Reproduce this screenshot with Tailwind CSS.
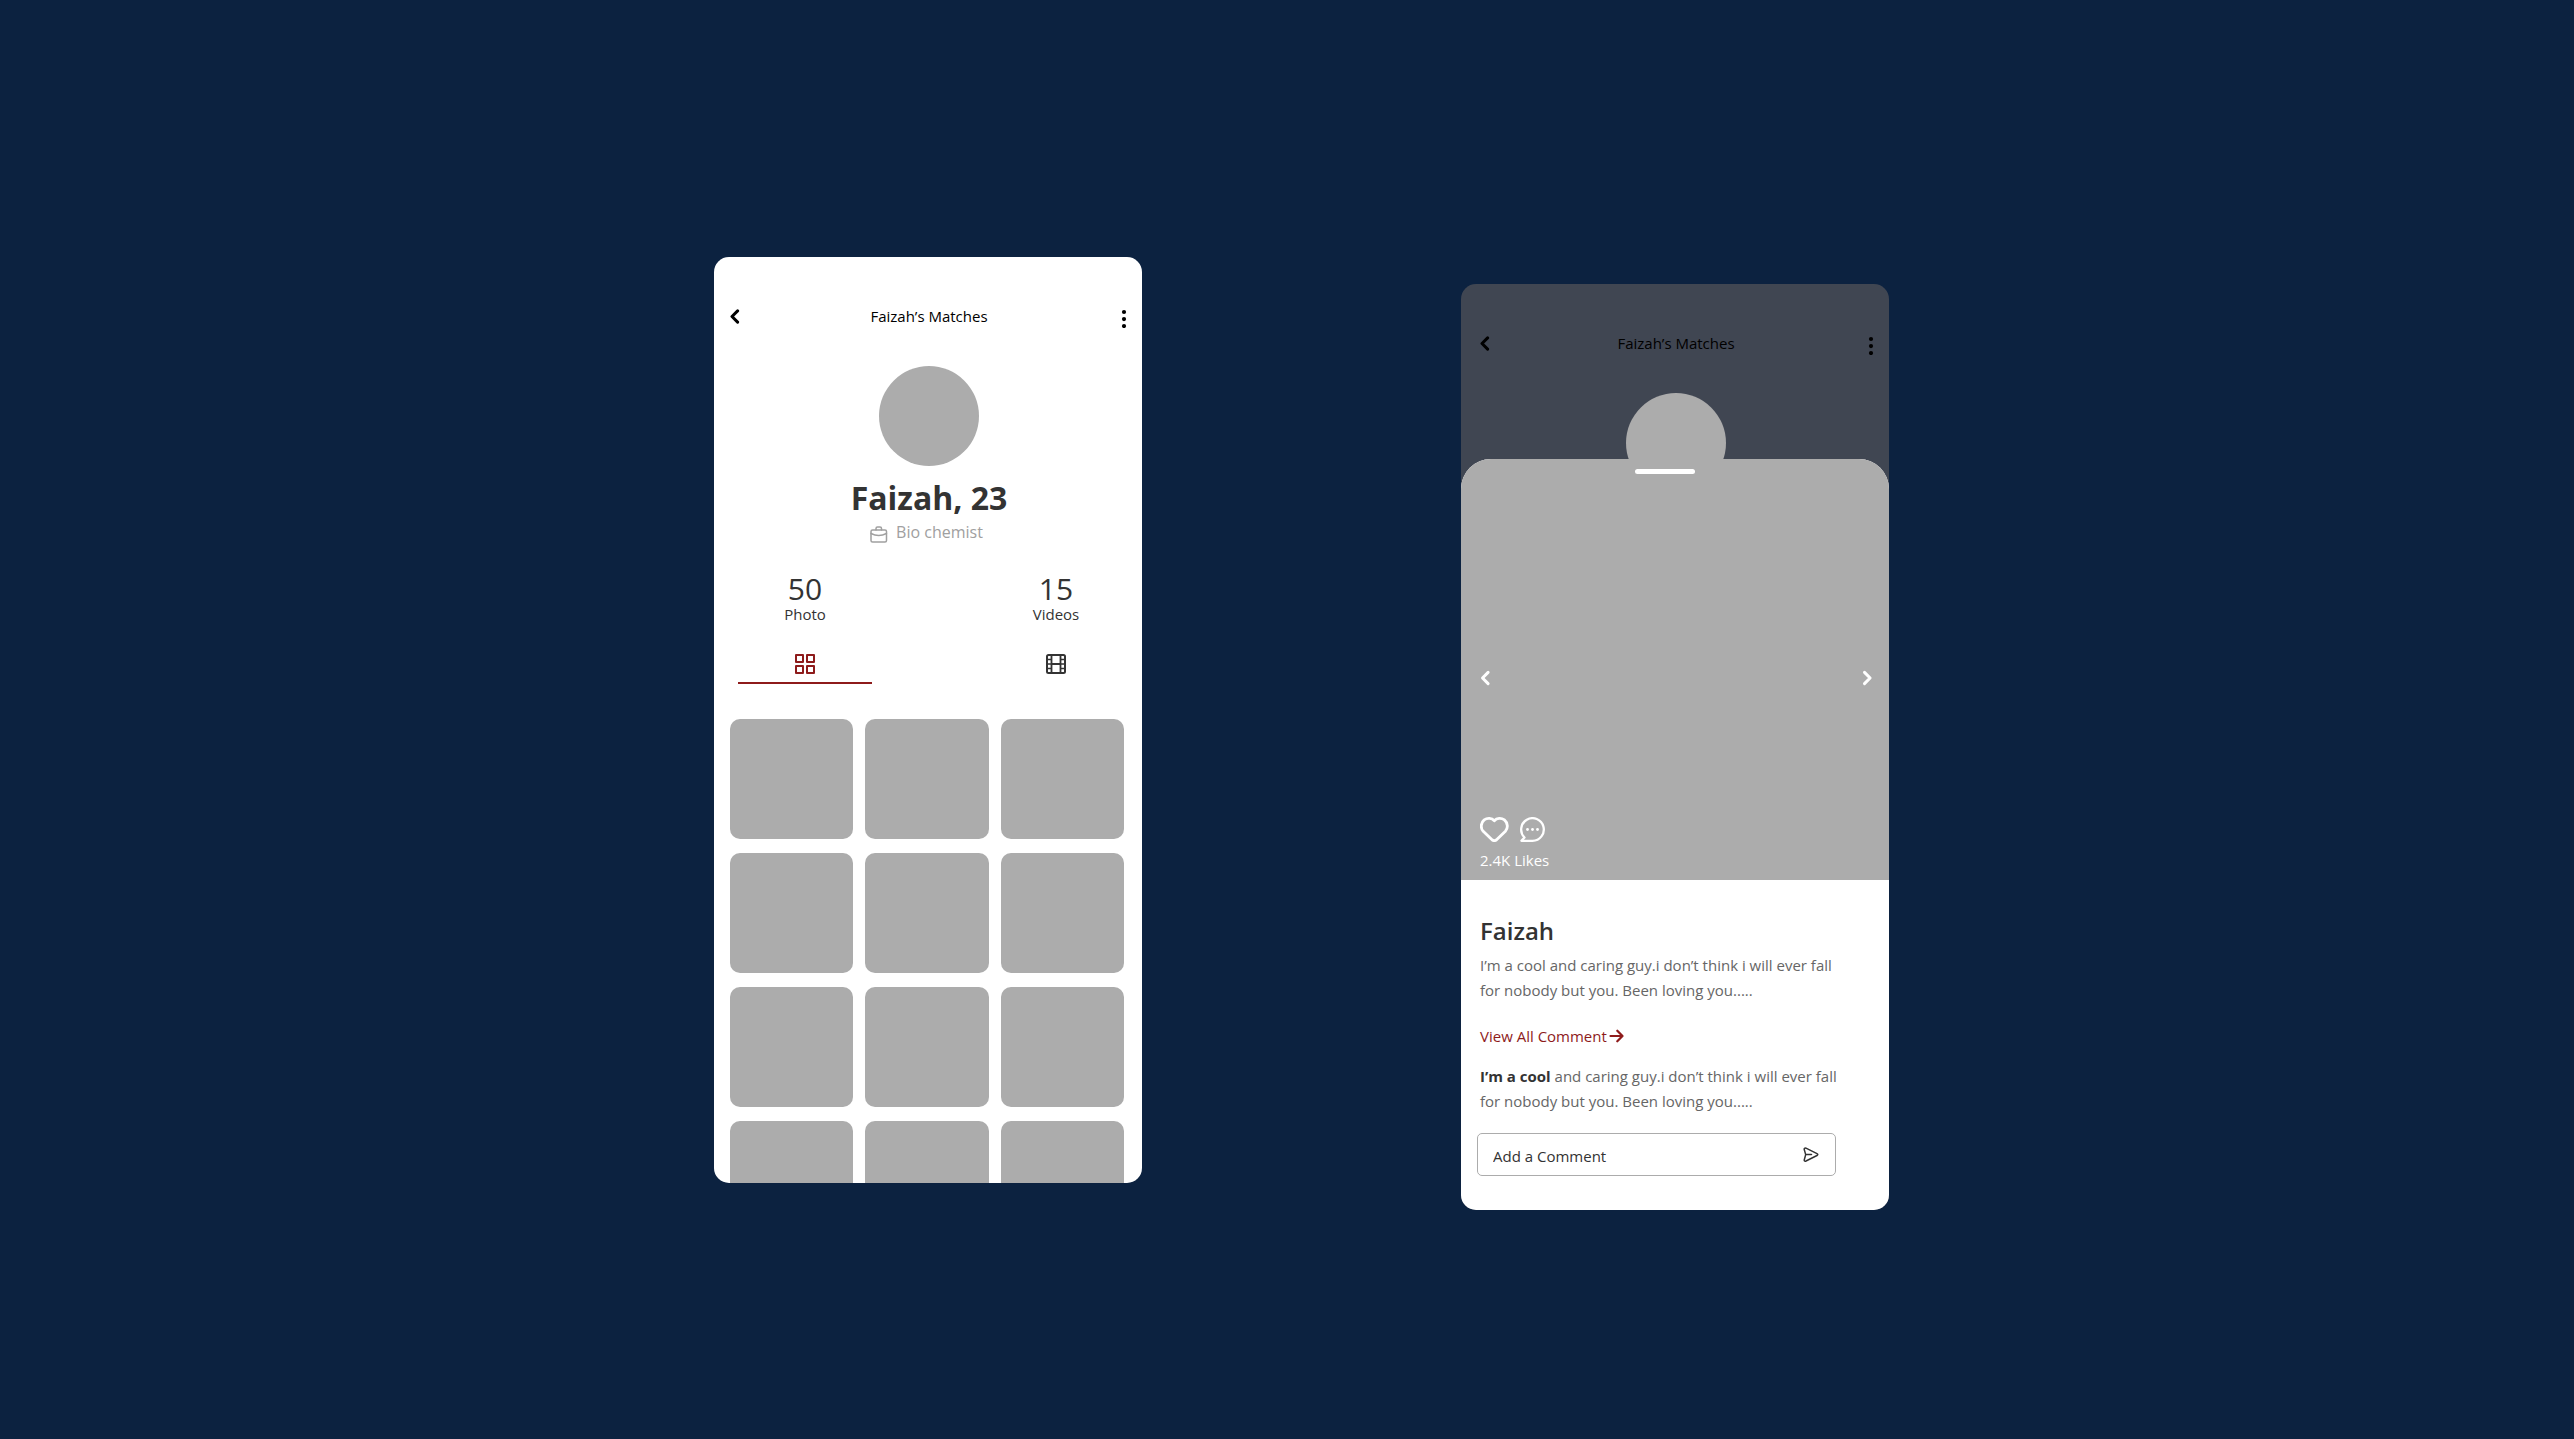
<!DOCTYPE html>
<html lang="en">
<head>
<meta charset="utf-8">
<meta name="viewport" content="width=device-width, initial-scale=1">
<title>Faizah’s Matches</title>
<script src="https://cdn.jsdelivr.net/npm/@tailwindcss/browser@4"></script>
</head>
<body class="bg-[#0c2240] font-['Open_Sans',sans-serif] text-[15px] leading-5 text-[#333333]">
<main class="flex min-h-screen flex-wrap items-start justify-center gap-x-[319px] gap-y-10 pt-[257px] pb-10 pl-[29px]">

  <!-- Profile -->
  <section class="h-[926px] w-[428px] max-w-full overflow-hidden rounded-[15px] bg-white pt-[49px] pr-[14px] pl-4">
    <header class="flex h-5 items-center justify-between text-black">
      <button type="button" aria-label="Back" class="w-8"><svg class="h-4 w-[10px]" viewBox="0 0 10 16" fill="none" stroke="currentColor" stroke-width="3" stroke-linecap="round" stroke-linejoin="round"><path d="M7.600 2.900 2 8.500l5.600 5.600"/></svg></button>
      <h1>Faizah’s Matches</h1>
      <button type="button" aria-label="More" class="flex w-8 justify-end"><svg class="h-6 w-2" viewBox="0 0 8 24" fill="currentColor"><circle cx="4" cy="8" r="2.1"/><circle cx="4" cy="15.100" r="2.1"/><circle cx="4" cy="22" r="2.100"/></svg></button>
    </header>
    <div class="mx-auto mt-10 size-[100px] rounded-full bg-[#acacac]"></div>
    <h2 class="mt-3 text-center text-[32px] leading-10 font-bold">Faizah, 23</h2>
    <p class="mt-[2px] flex items-end justify-center gap-2 pr-[5px] text-base text-[#a0a0a0]">
      <svg class="size-[18px]" viewBox="0 0 18 18" fill="none" stroke="currentColor" stroke-width="1.500" stroke-linecap="round" stroke-linejoin="round"><rect x="1" y="4" width="15.500" height="12" rx="1.500"/><path d="M6 4V2.500Q6 1 7.500 1H10Q11.500 1 11.500 2.500V4M1 7.500Q8.700 11.500 16.500 7.500"/></svg>
      <span>Bio chemist</span>
    </p>
    <div class="mt-[29px] flex justify-between pr-[5px] pl-2 text-center">
      <button type="button" class="w-[134px] border-b-2 border-[#8e1b1b] pb-2">
        <span class="block text-[30px] leading-[31px]">50</span>
        <span class="block">Photo</span>
        <svg class="mx-auto mt-[30px] size-5 text-[#8e1b1b]" viewBox="0 0 20 20" fill="none" stroke="currentColor" stroke-width="2" stroke-linejoin="round"><path d="M1 1h7v7H1zM12 1h7v7h-7zM1 12h7v7H1zM12 12h7v7h-7z"/></svg>
      </button>
      <button type="button" class="w-[134px] border-b-2 border-transparent pb-2">
        <span class="block text-[30px] leading-[31px]">15</span>
        <span class="block">Videos</span>
        <svg class="mx-auto mt-[30px] size-5" viewBox="0 0 20 20" fill="none" stroke="currentColor"><rect x="1" y="1" width="18" height="18" rx="1.500" stroke-width="2"/><path stroke-width="1.800" d="M5.500 1v18M14.500 1v18M5.500 10h9"/><path stroke-width="1.600" d="M1 5.500h4.500M1 10h4.500M1 14.500h4.500M14.500 5.500H19M14.500 10H19M14.500 14.500H19"/></svg>
      </button>
    </div>
    <div class="mt-[35px] mr-1 grid grid-cols-3 gap-x-3 gap-y-[14px]">
      <div class="h-[120px] rounded-[10px] bg-[#acacac]"></div>
      <div class="h-[120px] rounded-[10px] bg-[#acacac]"></div>
      <div class="h-[120px] rounded-[10px] bg-[#acacac]"></div>
      <div class="h-[120px] rounded-[10px] bg-[#acacac]"></div>
      <div class="h-[120px] rounded-[10px] bg-[#acacac]"></div>
      <div class="h-[120px] rounded-[10px] bg-[#acacac]"></div>
      <div class="h-[120px] rounded-[10px] bg-[#acacac]"></div>
      <div class="h-[120px] rounded-[10px] bg-[#acacac]"></div>
      <div class="h-[120px] rounded-[10px] bg-[#acacac]"></div>
      <div class="h-[120px] rounded-[10px] bg-[#acacac]"></div>
      <div class="h-[120px] rounded-[10px] bg-[#acacac]"></div>
      <div class="h-[120px] rounded-[10px] bg-[#acacac]"></div>
    </div>
  </section>

  <!-- Photo sheet over the dimmed profile -->
  <section class="mt-[27px] w-[428px] max-w-full overflow-hidden rounded-[15px] bg-[#404652] pt-[49px]">
    <header class="flex h-5 items-center justify-between pr-[14px] pl-4 text-black">
      <button type="button" aria-label="Back" class="w-8 pl-[3px] text-left"><svg class="h-4 w-[10px]" viewBox="0 0 10 16" fill="none" stroke="currentColor" stroke-width="3" stroke-linecap="round" stroke-linejoin="round"><path d="M7.600 2.900 2 8.500l5.600 5.600"/></svg></button>
      <h1>Faizah’s Matches</h1>
      <button type="button" aria-label="More" class="flex w-8 justify-end"><svg class="h-6 w-2" viewBox="0 0 8 24" fill="currentColor"><circle cx="4" cy="8" r="2.1"/><circle cx="4" cy="15.100" r="2.1"/><circle cx="4" cy="22" r="2.100"/></svg></button>
    </header>
    <div class="mt-10 pl-[2px]"><div class="mx-auto size-[100px] rounded-full bg-[#acacac]"></div></div>

    <article class="relative -mt-[34px] overflow-hidden rounded-t-[30px] bg-white">
      <div class="bg-[#acacac] pt-[10px] pr-4 pb-[10px] pl-[19px] text-white">
        <div class="pr-[23px]"><div class="mx-auto h-[5px] w-[60px] rounded-[3px] bg-white"></div></div>
        <div class="mt-[196px] flex h-4 items-center justify-between">
          <button type="button" aria-label="Previous"><svg class="h-4 w-3" viewBox="0 0 12 16" fill="none" stroke="currentColor" stroke-width="3" stroke-linecap="round" stroke-linejoin="round"><path d="M8.100 2.400 2.500 8l5.600 5.600"/></svg></button>
          <button type="button" aria-label="Next"><svg class="h-4 w-3" viewBox="0 0 12 16" fill="none" stroke="currentColor" stroke-width="3" stroke-linecap="round" stroke-linejoin="round"><path d="M3.500 2.400 9.100 8l-5.600 5.600"/></svg></button>
        </div>
        <div class="mt-[131px] flex h-[25px] gap-[11px]">
          <button type="button" aria-label="Like"><svg class="h-[25px] w-[29px]" viewBox="0 0 29 25" fill="none" stroke="currentColor" stroke-width="2.800" stroke-linejoin="round"><path d="M14.300 3.700C11.800.900 7.300.700 4.200 2.900.500 6 .500 11.200 3.200 14.300L12.300 23Q14.300 24.300 16.300 23L25.400 14.300C28.200 11.200 28 6 24.400 2.900 21.300.700 16.800.900 14.300 3.700Z"/></svg></button>
          <button type="button" aria-label="Comment"><svg class="size-[25px]" viewBox="0 0 25 25" fill="none" stroke="currentColor" stroke-width="2.300" stroke-linejoin="round"><path d="M12.500 23.800H1.400L4.500 20.500A11.300 11.300 0 1 1 12.500 23.800Z"/><g fill="currentColor" stroke="none"><circle cx="7.500" cy="12.500" r="1.400"/><circle cx="12.500" cy="12.500" r="1.400"/><circle cx="17.500" cy="12.500" r="1.400"/></g></svg></button>
        </div>
        <p class="mt-2">2.4K Likes</p>
      </div>
      <div class="pt-[35px] pr-12 pb-[34px] pl-[19px]">
        <h2 class="text-2xl font-semibold">Faizah</h2>
        <p class="mt-[6px] leading-[25px] text-[#666666]">I’m a cool and caring guy.i don’t think i will ever fall for nobody but you. Been loving you.....</p>
        <a href="#" class="mt-[23px] flex items-center gap-[2px] text-[#8e1b1b]">View All Comment<svg class="h-[14px] w-[15px]" viewBox="0 0 15 14" fill="none" stroke="currentColor" stroke-width="2.200" stroke-linecap="round" stroke-linejoin="round"><path d="M1.500 7h12M8.300 1.700 13.500 7 8.300 12.300"/></svg></a>
        <p class="mt-[18px] leading-[25px] text-[#666666]"><b class="font-bold text-[#333333]">I’m a cool</b> and caring guy.i don’t think i will ever fall for nobody but you. Been loving you.....</p>
        <form class="mt-[19px] -ml-[3px] flex h-[43px] w-[359px] items-center rounded-[5px] border border-[#acacac] pr-4 pl-[15px]">
          <input type="text" aria-label="Add a Comment" placeholder="Add a Comment" class="h-5 flex-1 pt-[3px] outline-none placeholder:text-[#333333]">
          <button type="button" aria-label="Send"><svg class="size-4" viewBox="0 0 16 16" fill="none" stroke="currentColor" stroke-width="1.500" stroke-linecap="round" stroke-linejoin="round"><path d="M1.300 2.700C.900 1.300 1.800.700 3 1.200L14 6.600Q15.600 7.500 14 8.500L3 14Q.900 14.700 1.300 12.700L2.700 7.600ZM2.700 7.600H8.500"/></svg></button>
        </form>
      </div>
    </article>
  </section>
</main>
</body>
</html>
